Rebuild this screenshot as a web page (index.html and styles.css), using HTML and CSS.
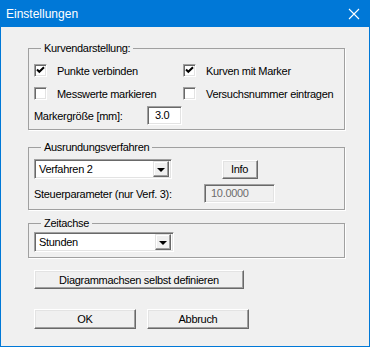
FILE: index.html
```html
<!DOCTYPE html>
<html lang="de">
<head>
    <meta charset="UTF-8">
    <title>Einstellungen</title>
    <link rel="stylesheet" href="styles.css">
</head>
<body>
    <div class="window">
        <div class="titlebar">
            <span class="title">Einstellungen</span>
            <svg class="close" width="12" height="12" viewBox="0 0 12 12">
                <path d="M1 1 L11 11 M11 1 L1 11" stroke="#fff" stroke-width="1.1" fill="none"/>
            </svg>
        </div>

        <div class="content">
            <fieldset class="group group-curves">
                <legend>Kurvendarstellung:</legend>
                <div class="curve-grid">
                    <label class="check">
                        <span class="box"><svg width="11" height="11" viewBox="0 0 11 11"><path d="M2 4.5 L4.3 6.8 L9 2.2" stroke="#000" stroke-width="2" fill="none"/></svg></span>
                        Punkte verbinden
                    </label>
                    <label class="check">
                        <span class="box"><svg width="11" height="11" viewBox="0 0 11 11"><path d="M2 4.5 L4.3 6.8 L9 2.2" stroke="#000" stroke-width="2" fill="none"/></svg></span>
                        Kurven mit Marker
                    </label>
                    <label class="check"><span class="box"></span>Messwerte markieren</label>
                    <label class="check"><span class="box"></span>Versuchsnummer eintragen</label>
                    <div class="marker-row">
                        <span class="marker-label">Markergröße [mm]:</span>
                        <span class="edit edit-marker">3.0</span>
                    </div>
                </div>
            </fieldset>

            <fieldset class="group group-smooth">
                <legend>Ausrundungsverfahren</legend>
                <div class="smooth-grid">
                    <div class="combo combo-method">
                        <span class="combo-text">Verfahren 2</span>
                        <span class="combo-btn"><span class="arrow"></span></span>
                    </div>
                    <button class="btn btn-info">Info</button>
                    <span class="param-label">Steuerparameter (nur Verf. 3):</span>
                    <span class="edit edit-disabled">10.0000</span>
                </div>
            </fieldset>

            <fieldset class="group group-time">
                <legend>Zeitachse</legend>
                <div class="combo combo-time">
                    <span class="combo-text">Stunden</span>
                    <span class="combo-btn"><span class="arrow"></span></span>
                </div>
            </fieldset>

            <button class="btn btn-axes">Diagrammachsen selbst definieren</button>

            <div class="actions">
                <button class="btn btn-action">OK</button>
                <button class="btn btn-action">Abbruch</button>
            </div>
        </div>
    </div>
</body>
</html>
```

FILE: styles.css
```css
body {
    margin: 0;
    font-family: "Liberation Sans", Arial, sans-serif;
    font-size: 11px;
    letter-spacing: -0.3px;
    color: #000;
    background-color: #f0f0f0;
}
.window {
    width: 370px;
    height: 347px;
    box-sizing: border-box;
    border: 1px solid #0078d7;
    border-top: none;
    background-color: #f0f0f0;
}
.titlebar {
    height: 27px;
    margin: 0 -1px;
    background-color: #0078d7;
    display: flex;
    align-items: center;
    justify-content: space-between;
    padding: 0 10px 0 6px;
}
.title {
    color: #fff;
    font-size: 12px;
    letter-spacing: 0;
}
.close {
    display: block;
}
.content {
    padding-left: 27px;
}
.group {
    width: 317px;
    box-sizing: border-box;
    margin: 0;
    padding: 0 5px;
    min-width: 0;
    border: 1px solid #a0a0a0;
    box-shadow: 1px 1px 0 #fff;
}
.group legend {
    margin-left: 7px;
    padding: 0 3px;
    line-height: 14px;
}
.group-curves {
    margin-top: 14px;
    padding-top: 4px;
    padding-bottom: 3px;
}
.curve-grid {
    display: grid;
    grid-template-columns: 149px 1fr;
    grid-template-rows: 23px 23px 21px;
    align-items: center;
}
.check {
    display: flex;
    align-items: center;
    gap: 10px;
    white-space: nowrap;
}
.box {
    flex: none;
    width: 13px;
    height: 13px;
    box-sizing: border-box;
    background-color: #fff;
    border: 1px solid;
    border-color: #a0a0a0 #fff #fff #a0a0a0;
    box-shadow: inset 1px 1px #696969, inset -1px -1px #e3e3e3;
    display: flex;
    align-items: center;
    justify-content: center;
}
.box svg {
    display: block;
}
.marker-row {
    grid-column: 1 / 3;
    display: flex;
    align-items: center;
}
.marker-label {
    width: 113px;
}
.edit {
    box-sizing: border-box;
    height: 19px;
    line-height: 17px;
    background-color: #fff;
    border: 1px solid;
    border-color: #a0a0a0 #fff #fff #a0a0a0;
    box-shadow: inset 1px 1px #696969, inset -1px -1px #e3e3e3;
}
.edit-marker {
    width: 35px;
    padding-left: 7px;
}
.edit-disabled {
    width: 71px;
    padding-left: 6px;
    height: 19px;
    color: #6d6d6d;
    background-color: #f0f0f0;
}
.group-smooth {
    margin-top: 10px;
    padding-top: 5px;
    padding-bottom: 6px;
}
.smooth-grid {
    display: grid;
    grid-template-columns: 170px 71px;
    grid-template-rows: 20px 19px;
    row-gap: 5px;
    align-items: center;
}
.combo {
    box-sizing: border-box;
    height: 20px;
    background-color: #fff;
    border: 1px solid;
    border-color: #a0a0a0 #fff #fff #a0a0a0;
    box-shadow: inset 1px 1px #696969, inset -1px -1px #e3e3e3;
    display: flex;
    align-items: center;
    justify-content: space-between;
    padding: 2px;
}
.combo-method {
    width: 138px;
}
.combo-time {
    width: 140px;
}
.combo-text {
    padding-left: 2px;
}
.combo-btn {
    width: 16px;
    height: 16px;
    box-sizing: border-box;
    background-color: #f0f0f0;
    border: 1px solid;
    border-color: #e3e3e3 #696969 #696969 #e3e3e3;
    box-shadow: inset -1px -1px #a0a0a0, inset 1px 1px #fff;
    display: flex;
    align-items: center;
    justify-content: center;
}
.arrow {
    width: 0;
    height: 0;
    border-left: 4px solid transparent;
    border-right: 4px solid transparent;
    border-top: 4px solid #000;
    margin-top: 1px;
}
.btn {
    font-family: "Liberation Sans", Arial, sans-serif;
    font-size: 11px;
    letter-spacing: -0.3px;
    color: #000;
    background-color: #f0f0f0;
    box-sizing: border-box;
    border: 1px solid;
    border-color: #fff #696969 #696969 #fff;
    box-shadow: inset -1px -1px #a0a0a0, inset 1px 1px #e3e3e3;
    padding: 0;
    display: block;
}
.btn-info {
    width: 36px;
    height: 19px;
    justify-self: center;
}
.group-time {
    margin-top: 6px;
    padding-top: 2px;
    padding-bottom: 5px;
}
.btn-axes {
    width: 210px;
    height: 19px;
    margin: 12px 0 0 6px;
}
.actions {
    display: flex;
    gap: 11px;
    margin: 20px 0 0 6px;
}
.btn-action {
    width: 102px;
    height: 20px;
}
```
